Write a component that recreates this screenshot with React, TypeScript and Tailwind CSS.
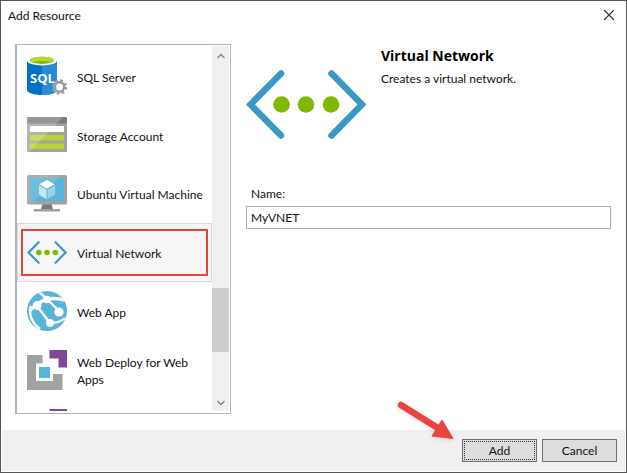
import type { ReactNode } from 'react';
import { useState } from 'react';

function SqlIcon() {
  return (
    <svg viewBox="0 0 40 40" className="size-10" aria-hidden="true">
      <path d="M0 4v30c0 2.700 6.700 5 15 5s15-2.300 15-5V4z" fill="#0072c6" />
      <path d="M15 4v35c8.300 0 15-2.300 15-5V4z" fill="#2a8ad4" />
      <ellipse cx="15" cy="4.500" rx="15" ry="5" fill="#fff" />
      <ellipse cx="15" cy="4.300" rx="12.200" ry="3.600" fill="#7fba00" />
      <path d="M3 4.500C3 2.500 8 .7 15 .7s12 1.800 12 3.800c0 .8-.8 1.500-2 2.100-2-1.100-5.500-1.700-10-1.700S7 5.500 5 6.600c-1.200-.6-2-1.300-2-2.100z" fill="#b8d432" />
      <circle cx="32.500" cy="31" r="6" fill="#fff" />
      <circle cx="32.500" cy="31" r="4.700" fill="none" stroke="#9a9b9c" strokeWidth="2.400" />
      <circle cx="32.500" cy="31" r="6.400" fill="none" stroke="#9a9b9c" strokeWidth="2.600" strokeDasharray="2.500 2.526" />
      <text x="3" y="26.500" fontSize="13" fontWeight="700" fill="#fff" fontFamily="'Open Sans', sans-serif">SQL</text>
    </svg>
  );
}

function StorageIcon() {
  return (
    <svg viewBox="0 0 40 40" className="size-10" aria-hidden="true">
      <rect y="2" width="40" height="35" rx="1.500" fill="#a0a1a2" />
      <path d="M0 8.500V3.500Q0 2 1.500 2h37Q40 2 40 3.500v5z" fill="#7a7a7a" />
      <path d="M3 11h34v6H3z" fill="#fff" />
      <path d="M3 20h34v5.500H3zM3 28.500h34V34H3z" fill="#b8d432" />
      <path d="M0 37V3.500Q0 2 1.500 2H36L2 37z" fill="#fff" opacity=".22" />
    </svg>
  );
}

function MachineIcon() {
  return (
    <svg viewBox="0 0 40 40" className="size-10" aria-hidden="true">
      <path d="M15.500 30h9l1.500 5H14z" fill="#7a7a7a" />
      <path d="M7 35h26v2.500H7z" fill="#a0a1a2" />
      <rect y="1" width="40" height="29.500" rx="1.500" fill="#a0a1a2" />
      <path d="M3 4h34v23H3z" fill="#59b4d9" />
      <path d="M0 30V2.500Q0 1 1.500 1H34L3 30.500z" fill="#fff" opacity=".12" />
      <circle cx="20" cy="2.500" r="1" fill="#b8d432" />
      <path d="M20 6l7.500 4.300L20 14.700l-7.500-4.400z" fill="#fff" />
      <path d="M12 11.500l7.500 4.300v9.200L12 20.700z" fill="#c9e7f3" />
      <path d="M28 11.500l-7.500 4.300v9.200l7.500-4.300z" fill="#9ad1e8" />
    </svg>
  );
}

function NetworkIcon({ className }: { className: string }) {
  return (
    <svg viewBox="0 0 120 70" className={className} aria-hidden="true">
      <path d="M35 3.500L4.500 34.500l30.500 31M85.500 3.500l30.500 31-30.500 31" fill="none" stroke="#3999c6" strokeWidth="6.500" strokeLinecap="round" strokeLinejoin="miter" />
      <g fill="#7fba00">
        <circle cx="35.500" cy="34.500" r="8.300" />
        <circle cx="60" cy="34.500" r="8.300" />
        <circle cx="85" cy="34.500" r="8.300" />
      </g>
    </svg>
  );
}

function WebAppIcon() {
  return (
    <svg viewBox="0 0 40 40" className="size-10" aria-hidden="true">
      <clipPath id="globe"><circle cx="20" cy="20" r="20" /></clipPath>
      <g clipPath="url(#globe)">
        <path d="M0 0h40v40H0z" fill="#59b4d9" />
        <g fill="none" stroke="#fff">
          <path d="M2 20C5 18 8 15 12 12C18 8 26 6 37 9" strokeWidth="3.400" />
          <path d="M11 0l9 8L32 20" strokeWidth="2.400" />
          <path d="M4 15C1 24 6 33 13 38" strokeWidth="2.400" />
          <path d="M10 15L23 32c6 0 11-1 15-5" strokeWidth="2.400" />
        </g>
        <g fill="#fff">
          <circle cx="20" cy="8.500" r="3.800" />
          <circle cx="10" cy="14.500" r="4.400" />
          <circle cx="32" cy="21" r="4.600" />
          <circle cx="23" cy="32" r="4" />
        </g>
      </g>
    </svg>
  );
}

function DeployIcon() {
  return (
    <svg viewBox="0 0 40 40" className="size-10" aria-hidden="true">
      <path d="M0 5h15.500v8.500H9V31h17v-7h9.500v16H0z" fill="#a0a1a2" />
      <path d="M12 17h11v11H12z" fill="#59b4d9" />
      <path d="M22.500 0H40v17.500h-8.500v-9h-9z" fill="#804998" />
    </svg>
  );
}

const resources: { name: string; icon: ReactNode }[] = [
  { name: 'SQL Server', icon: <SqlIcon /> },
  { name: 'Storage Account', icon: <StorageIcon /> },
  { name: 'Ubuntu Virtual Machine', icon: <MachineIcon /> },
  { name: 'Virtual Network', icon: <NetworkIcon className="w-10" /> },
  { name: 'Web App', icon: <WebAppIcon /> },
  { name: 'Web Deploy for Web Apps', icon: <DeployIcon /> },
  { name: '', icon: <DeployIcon /> },
];

function Chevron({ down = false }: { down?: boolean }) {
  return (
    <svg viewBox="0 0 8 6" className="h-1.5 w-2" fill="none" stroke="#858585" strokeWidth="1.400" aria-hidden="true">
      <path d={down ? 'M.5 1L4 4.500 7.500 1' : 'M.5 5L4 1.500 7.500 5'} />
    </svg>
  );
}

function ScrollBar() {
  return (
    <div className="flex w-[17px] shrink-0 flex-col bg-[#f0f0f0]">
      <div className="flex h-5 items-center justify-center"><Chevron /></div>
      <div className="flex-[222]" />
      <div className="h-16 bg-[#cdcdcd]" />
      <div className="flex-[43]" />
      <div className="flex h-4 items-center justify-center"><Chevron down /></div>
    </div>
  );
}

export default function App() {
  const [name, setName] = useState('MyVNET');
  return (
    <div className="flex h-screen flex-col border border-[#555] bg-white p-px pt-0 font-['Lato','Noto_Sans',sans-serif] text-xs text-[#111]">
      <header className="flex h-[43px] shrink-0 items-start justify-between pt-1.5 pr-2.5 pl-1.5">
        <h1 className="leading-[18px]">Add Resource</h1>
        <button type="button" aria-label="Close" className="mt-0.5 flex size-3 items-center justify-center">
          <svg viewBox="0 0 12 12" className="size-3" stroke="#333" strokeWidth="1.100" aria-hidden="true">
            <path d="M1 1l10 10M11 1L1 11" />
          </svg>
        </button>
      </header>

      <main className="flex min-h-0 flex-1 gap-[15px] pr-3.5 pb-4 pl-[13px]">
        <div className="flex w-[216px] shrink-0 border border-l-2 border-[#b2b4bb] pt-px pr-px pb-0.5">
          <ul className="grid flex-1 auto-rows-[calc(100%/6.2)] overflow-hidden pt-px">
            {resources.map((item, index) => (
              <li key={index} className="grid">
                <button
                  type="button"
                  aria-label={item.name || 'More resources'}
                  aria-pressed={index === 3}
                  className="relative flex items-center gap-2.5 border border-transparent pr-1 pl-[9px] text-left leading-[17px] aria-pressed:border-[#d9d9d9] aria-pressed:bg-[#f6f6f6]"
                >
                  <span className="w-10 shrink-0">{item.icon}</span>
                  <span className="pt-0.5">{item.name}</span>
                  {index === 3 && <span className="absolute inset-x-[3px] inset-y-[5px] border-2 border-[#e8453f]" />}
                </button>
              </li>
            ))}
          </ul>
          <ScrollBar />
        </div>

        <section className="min-w-0 flex-1">
          <div className="flex gap-[15px]">
            <NetworkIcon className="mt-[26px] w-[120px] shrink-0" />
            <div>
              <h2 className="font-['Open_Sans','Noto_Sans',sans-serif] text-sm leading-6 font-bold text-black">Virtual Network</h2>
              <p className="mt-0.5 leading-[18px]">Creates a virtual network.</p>
            </div>
          </div>
          <label htmlFor="resource-name" className="mt-[45px] block pl-[5px] leading-[18px]">Name:</label>
          <input
            id="resource-name"
            value={name}
            onChange={(event) => setName(event.target.value)}
            className="mt-[3px] block h-[23px] w-full border border-[#abadb3] px-1 outline-none"
          />
        </section>
      </main>

      <footer className="relative flex h-[41px] shrink-0 items-center justify-end gap-[5px] bg-[#f0f0f0] pr-2">
        <svg viewBox="0 0 62 44" className="absolute right-[169px] bottom-[30px] h-11 w-[62px] drop-shadow-sm" aria-hidden="true">
          <path d="M7 8L43 30.500" stroke="#e8453f" strokeWidth="6.500" strokeLinecap="round" />
          <path d="M48 23L59 41.500 38 39z" fill="#e8453f" stroke="#e8453f" strokeWidth="1" strokeLinejoin="round" />
        </svg>
        <button type="button" className="h-[23px] w-[75px] border border-[#707070] bg-[#ddd] p-px">
          <span className="flex h-full items-center justify-center border border-dotted border-[#333]">Add</span>
        </button>
        <button type="button" className="h-[23px] w-[75px] border border-[#707070] bg-[#ddd]">Cancel</button>
      </footer>
    </div>
  );
}
